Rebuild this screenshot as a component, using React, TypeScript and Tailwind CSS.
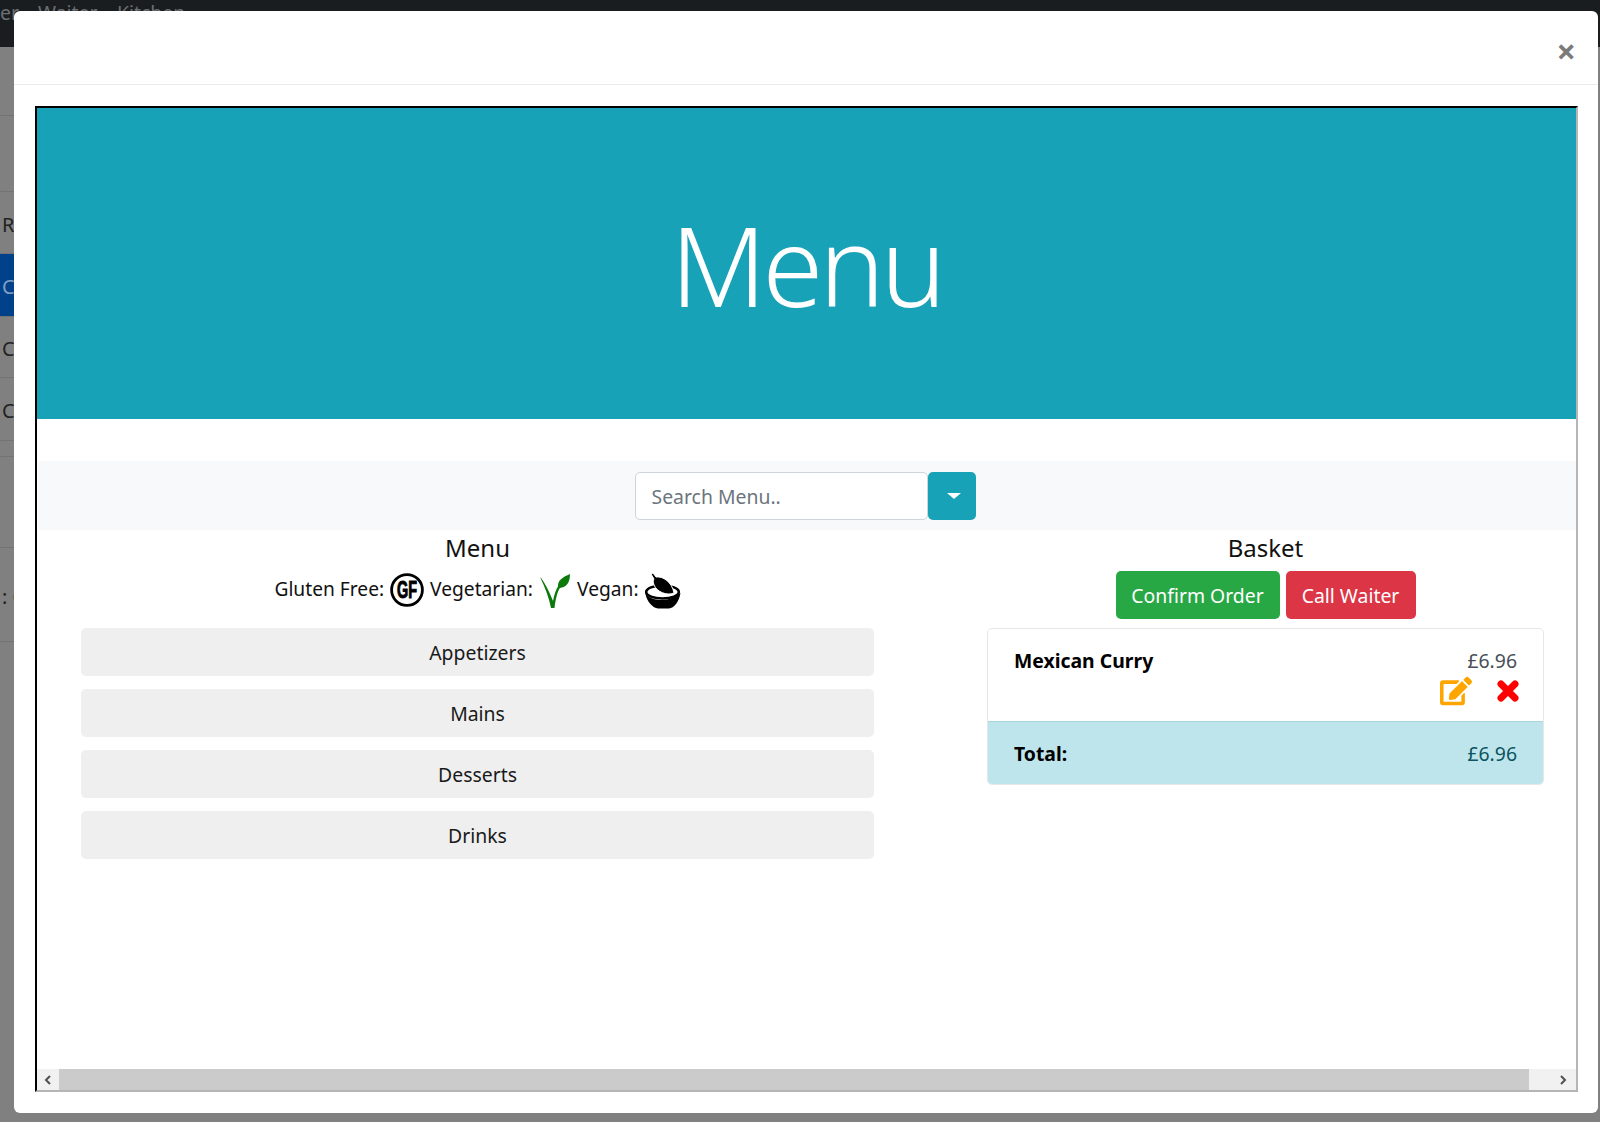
import { FaEdit } from "react-icons/fa";

const font = { fontFamily: '"Noto Sans", "Open Sans", sans-serif' };

function GlutenIcon() {
  return (
    <svg width="34" height="34" viewBox="0 0 34 34" className="shrink-0">
      <circle cx="17" cy="17" r="15.4" fill="white" stroke="black" strokeWidth="2.8" />
      <text x="17" y="25" textAnchor="middle" fontFamily="Liberation Sans" fontWeight="700" fontSize="23" textLength="20" lengthAdjust="spacingAndGlyphs" fill="black" stroke="black" strokeWidth="1">GF</text>
    </svg>
  );
}

function VegetarianIcon() {
  return (
    <svg width="32" height="36" viewBox="0 0 32 36" className="shrink-0">
      <path d="M1 4 C5 8 10 18 14 28 C15 22 17 16 20 12 L21.5 14 C18 19 16.5 27 15.5 35 L12 35 C10 25 6 14 1 4Z" fill="#0b7a0b" />
      <path d="M19 15 C18 7 24 4 31 1 C31 9 28 15 19 15Z" fill="#0b7a0b" />
    </svg>
  );
}

function VeganIcon() {
  return (
    <svg width="36" height="36" viewBox="0 0 36 36" className="shrink-0">
      <ellipse cx="17.5" cy="19" rx="16.3" ry="6.5" fill="white" stroke="black" strokeWidth="2.6" />
      <path d="M0.5 21 C2 29 8 35 13 35.5 L24 35.5 C29 35 34 29 35.5 20 C30 24 24 27 17.5 27 C10 27 4 25 0.5 21Z" fill="black" />
      <path d="M6 1 L8 0 L11 4 C18 3 27 9 29 20 C22 23 12 19 9 12 C8 9 8 7 9 6Z" fill="black" stroke="white" strokeWidth="1" />
    </svg>
  );
}

function SideRow({ h, text, active }: { h: string; text?: string; active?: boolean }) {
  return (
    <div className={`${h} w-[300px] flex items-center border-b border-[#737373] pt-[4px] text-[20px] ${active ? "bg-[#00418a] text-[#7f9fc4]" : "text-[#222]"}`}>
      <span className="pl-[2px] whitespace-nowrap">{text}</span>
    </div>
  );
}

function MenuButton({ label }: { label: string }) {
  return (
    <button className="w-[793px] h-[48px] pt-[2px] rounded-[5px] bg-[#efefef] text-[19.4px] text-[#1a1a1a]">{label}</button>
  );
}

export default function App() {
  return (
    <div style={font} className="relative w-[1600px] h-[1122px] overflow-hidden bg-[#808080]">
      <div className="h-[47px] bg-[#1a1d20] text-[19.4px] text-[#6c6e70] flex leading-[26px] whitespace-nowrap">
        <span className="w-[38px]">er</span>
        <span className="w-[79px]">Waiter</span>
        <span>Kitchen</span>
      </div>
      <div className="flex flex-col">
        <SideRow h="h-[69px]" />
        <SideRow h="h-[76px]" />
        <SideRow h="h-[62px]" text="R" />
        <SideRow h="h-[63px]" text="C" active />
        <SideRow h="h-[61px]" text="C" />
        <SideRow h="h-[63px]" text="C" />
        <SideRow h="h-[16px]" />
        <SideRow h="h-[91px]" />
        <SideRow h="h-[94px]" text=": C" />
      </div>

      <div className="absolute left-[14px] top-[11px] w-[1584px] h-[1102px] bg-white rounded-[6px] flex flex-col">
        <div className="h-[74px] shrink-0 border-b border-[#e9ecef] flex justify-end items-center pr-[22px] pt-[7px]">
          <span className="text-[34px] font-bold text-[#7b7b7b] leading-none">×</span>
        </div>
        <div className="mx-[21px] mt-[21px] w-[1543px] h-[986px] border-2 border-t-black border-l-black border-r-[#b5b5b5] border-b-[#b5b5b5] flex flex-col overflow-hidden">
          <div className="h-[311px] shrink-0 bg-[#17a2b8] flex items-center justify-center">
            <h1 className="text-[110px] tracking-[-4px] font-light text-white leading-none">Menu</h1>
          </div>
          <div className="mt-[42px] h-[69px] shrink-0 bg-[#f8f9fa] ml-px flex items-center justify-center pr-[4px]">
            <div className="flex">
              <input
                placeholder="Search Menu.."
                className="w-[293px] h-[48px] bg-white border border-[#ced4da] rounded-[5px] pl-[16px] pt-[2px] text-[19.4px] placeholder:text-[#6c757d] outline-none"
              />
              <button className="w-[48px] h-[48px] pl-[5px] bg-[#17a2b8] rounded-[5px] flex items-center justify-center">
                <span className="w-0 h-0 border-x-[7px] border-x-transparent border-t-[6px] border-t-white" />
              </button>
            </div>
          </div>
          <div className="flex flex-1 min-h-0 text-[#111]">
            <div className="w-[881px] shrink-0 flex flex-col items-center">
              <h4 className="text-[24px] h-[36px] leading-[36px]">Menu</h4>
              <div className="h-[62px] flex items-start justify-center gap-[6px] pt-[7px] text-[19.2px]">
                <span className="leading-[31px]">Gluten Free:</span>
                <GlutenIcon />
                <span className="leading-[31px]">Vegetarian:</span>
                <VegetarianIcon />
                <span className="leading-[31px]">Vegan:</span>
                <VeganIcon />
              </div>
              <div className="flex flex-col gap-[13px]">
                <MenuButton label="Appetizers" />
                <MenuButton label="Mains" />
                <MenuButton label="Desserts" />
                <MenuButton label="Drinks" />
              </div>
            </div>
            <div className="w-[557px] ml-[69px] shrink-0 flex flex-col items-center">
              <h4 className="text-[24px] h-[36px] leading-[36px]">Basket</h4>
              <div className="flex gap-[6px] mt-[5px]">
                <button className="w-[164px] h-[48px] pt-[2px] bg-[#28a745] text-white text-[19.4px] rounded-[5px]">Confirm Order</button>
                <button className="w-[130px] h-[48px] pt-[2px] bg-[#dc3545] text-white text-[19.4px] rounded-[5px]">Call Waiter</button>
              </div>
              <div className="w-full mt-[9px] border border-[#e5e7e9] rounded-[5px] overflow-hidden text-[19.4px]">
                <div className="h-[92px] px-[26px] pt-[17px] flex justify-between">
                  <span className="font-bold text-black leading-[30px]">Mexican Curry</span>
                  <div className="flex flex-col items-end">
                    <span className="text-[#495057] leading-[30px]">£6.96</span>
                    <div className="flex items-center gap-[24px] -mr-[3px] -mt-[1px]">
                      <FaEdit size={32} color="#ffa500" />
                      <svg width="24" height="24" viewBox="0 0 24 24">
                        <path d="M5 5 L19 19 M19 5 L5 19" stroke="#ff0000" strokeWidth="7" strokeLinecap="round" fill="none" />
                      </svg>
                    </div>
                  </div>
                </div>
                <div className="h-[63px] px-[26px] pt-[2px] bg-[#bee5eb] border-t border-[#abd5dc] flex items-center justify-between">
                  <span className="font-bold text-black">Total:</span>
                  <span className="text-[#0c5460]">£6.96</span>
                </div>
              </div>
            </div>
          </div>
          <div className="h-[21px] shrink-0 bg-[#f1f1f1] flex items-center">
            <div className="w-[22px] flex justify-center">
              <svg width="8" height="10" viewBox="0 0 8 10"><path d="M6 1 L2 5 L6 9" fill="none" stroke="#505050" strokeWidth="2" /></svg>
            </div>
            <div className="w-[1470px] h-full bg-[#cbcbcb]" />
            <div className="flex-1 flex justify-end pr-[9px]">
              <svg width="8" height="10" viewBox="0 0 8 10"><path d="M2 1 L6 5 L2 9" fill="none" stroke="#505050" strokeWidth="2" /></svg>
            </div>
          </div>
        </div>
      </div>
    </div>
  );
}
